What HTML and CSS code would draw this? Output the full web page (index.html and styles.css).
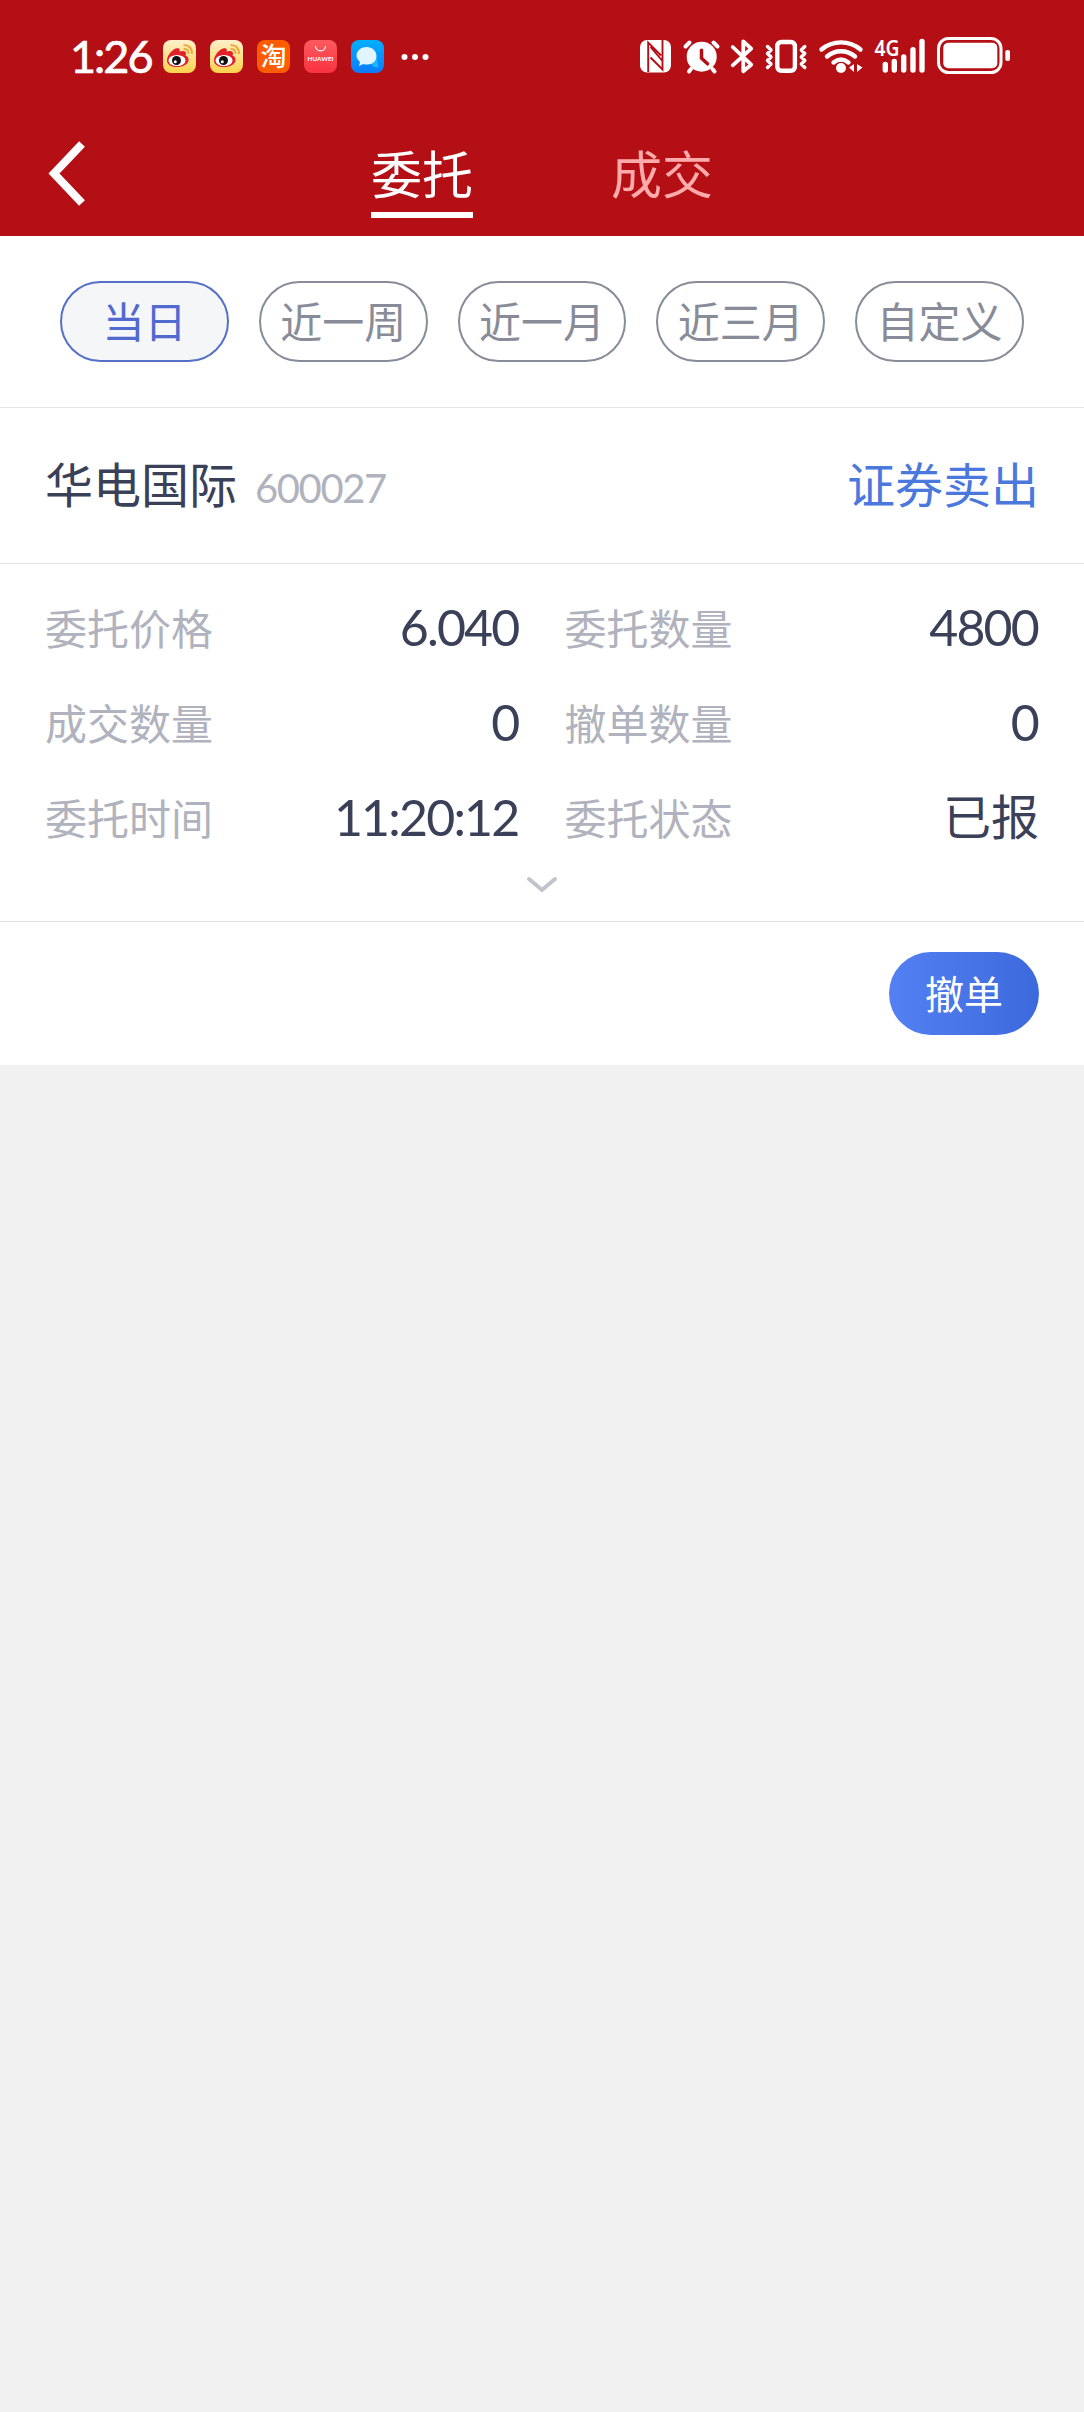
FILE: index.html
```html
<!DOCTYPE html>
<html lang="zh-CN">
<head>
<meta charset="utf-8">
<title>委托</title>
<link rel="stylesheet" href="styles.css">
</head>
<body>
<header class="top">
  <div class="status">
    <div class="status-left">
      <span class="time">1:26</span>
      <svg class="app" viewBox="0 0 33 33">
        <defs>
          <linearGradient id="wb" x2="0" y2="1"><stop stop-color="#fff0cb"/><stop offset="1" stop-color="#ffd24b"/></linearGradient>
          <g id="weibo">
            <rect width="33" height="33" rx="8" fill="url(#wb)"/>
            <path d="M4 20.500C4 14 12 6.500 16 8.500c1 1 1 2 .5 3 3-1 6.500-1 6.500 2 0 1-.3 1.500-.5 2C28 17.500 26.500 26 16 27 10 27.500 4 25.500 4 20.500z" fill="#e2202a"/>
            <ellipse cx="14" cy="20.500" rx="8.500" ry="5.500" fill="#fff"/>
            <circle cx="13.500" cy="20.500" r="4.500" fill="#111"/>
            <circle cx="12.300" cy="21.800" r="1.500" fill="#fff"/>
            <path d="M20.500 5q8.500 0 8.500 9M20.500 8.800q5 0 5 5" fill="none" stroke="#eda93a" stroke-width="2"/>
          </g>
        </defs>
        <use href="#weibo"/>
      </svg>
      <svg class="app" viewBox="0 0 33 33"><use href="#weibo"/></svg>
      <span class="app taobao">淘</span>
      <svg class="app" viewBox="0 0 33 33">
        <defs><linearGradient id="hw" x2="0" y2="1"><stop stop-color="#ff5a60"/><stop offset="1" stop-color="#f8323f"/></linearGradient></defs>
        <rect width="33" height="33" rx="8" fill="url(#hw)"/>
        <path d="M11.500 6c0 6.500 10 6.500 10 0" fill="none" stroke="#fff" stroke-width="1.200"/>
        <text class="brand" x="16.500" y="21" text-anchor="middle" textLength="26" lengthAdjust="spacingAndGlyphs">HUAWEI</text>
      </svg>
      <svg class="app" viewBox="0 0 33 33">
        <defs><linearGradient id="ms" x2="0" y2="1"><stop stop-color="#00b0ff"/><stop offset="1" stop-color="#0a7bff"/></linearGradient></defs>
        <rect width="33" height="33" rx="8" fill="url(#ms)"/>
        <path d="M21 21l5-3 1 6 .5 3.500-6-1z" fill="#16b8f8"/>
        <path d="M15.500 7c6 0 10 4 10 9s-4 8.500-9 8.500c-2 0-3 0-4-.5l-4.500 2 1-4C7 20 5.500 18 5.500 16c0-5 4-9 10-9z" fill="#e0f5ff"/>
      </svg>
      <svg class="more" viewBox="0 0 28 8" fill="#fff"><circle cx="3.500" cy="4" r="3"/><circle cx="14" cy="4" r="3"/><circle cx="24.500" cy="4" r="3"/></svg>
    </div>
    <svg class="status-right" viewBox="0 0 376 40" fill="none" stroke="#fff" stroke-linecap="round" stroke-linejoin="round">
      <rect x="0" y="4" width="31" height="32.500" rx="7" fill="#fff" stroke="none"/>
      <path d="M8.200 36V6.500L21 19.500M22.500 4v29.500L10.500 21.500M10.500 11L22.500 25" stroke="#b50f16" stroke-width="1.900" stroke-linecap="butt" stroke-linejoin="miter"/>
      <circle cx="61.700" cy="20.700" r="15" fill="#fff" stroke="none"/>
      <path d="M61.500 14.300v8l6 5.500" stroke="#b50f16" stroke-width="3.500"/>
      <path d="M45.500 10.500l4-4M73.500 6.500l4 4M51 33l-2 2.500M72.500 33l2 2.500" stroke-width="4"/>
      <path d="M92.700 11l18.500 17.700-7.900 6.600V5.300l7.900 7.400-18.500 16.600" stroke-width="3.800"/>
      <rect x="137.300" y="6" width="17.600" height="28.800" rx="4" stroke-width="4.400"/>
      <path d="M127.500 10.500l3.500 3.500-3.500 3.500 3.500 3.500-3.500 3.500 3.500 3.500-3.500 3.500M164.800 10.500l-3.500 3.500 3.500 3.500-3.500 3.500 3.500 3.500-3.500 3.500 3.500 3.500" stroke-width="3.400"/>
      <path d="M181.500 13.500c11-9.500 28-9.500 39 0M187 20.500c8-7 20-7 28 0M193.500 26.500c5-4 10-4 15 0" stroke-width="4.400"/>
      <circle cx="201" cy="32" r="5" fill="#fff" stroke="none"/>
      <path d="M214 28v8l-5-4.500zM217 28l5.500 3.500-5.500 4.500z" fill="#fff" stroke="none"/>
      <text class="net" x="234.500" y="19.500" textLength="25" lengthAdjust="spacingAndGlyphs">4G</text>
      <path d="M245.300 28.400v5.600M254.300 25.400v8.600M263.700 21v13M273 13.700v20.300M282 5.400v28.600" stroke-width="5.400"/>
      <rect x="298.500" y="2.500" width="62.500" height="34" rx="10" stroke-width="3"/>
      <rect x="303.300" y="6.700" width="54" height="25.600" rx="5" fill="#fff" stroke="none"/>
      <rect x="365.300" y="14" width="4.700" height="11" rx="2" fill="#fff" stroke="none"/>
    </svg>
  </div>
  <nav class="nav">
    <svg class="back" viewBox="0 0 40 64"><path d="M35 3L7 32.500 35 62" fill="none" stroke="#fff" stroke-width="8"/></svg>
    <div class="tabs"><span class="tab tab-on">委托</span><span class="tab">成交</span></div>
  </nav>
</header>

<div class="filters">
  <span class="chip chip-on">当日</span>
  <span class="chip">近一周</span>
  <span class="chip">近一月</span>
  <span class="chip">近三月</span>
  <span class="chip">自定义</span>
</div>

<section class="order">
  <div class="order-head">
    <span class="name">华电国际</span>
    <span class="code">600027</span>
    <span class="side">证券卖出</span>
  </div>
  <div class="order-body">
    <div class="fields">
      <div class="field"><span class="label">委托价格</span><span class="value">6.040</span></div>
      <div class="field"><span class="label">委托数量</span><span class="value">4800</span></div>
      <div class="field"><span class="label">成交数量</span><span class="value">0</span></div>
      <div class="field"><span class="label">撤单数量</span><span class="value">0</span></div>
      <div class="field"><span class="label">委托时间</span><span class="value">11:20:12</span></div>
      <div class="field"><span class="label">委托状态</span><span class="value value-cn">已报</span></div>
    </div>
    <svg class="expand" viewBox="0 0 32 18"><path d="M3 3l13 11L29 3" fill="none" stroke="#c3c4cb" stroke-width="4" stroke-linecap="round"/></svg>
  </div>
  <div class="order-foot"><button class="cancel">撤单</button></div>
</section>
</body>
</html>
```
FILE: styles.css
```css
* { box-sizing: border-box; }
body {
  margin: 0;
  min-height: 2412px;
  background: #f1f1f1;
  color: #3a4058;
  font-family: Lato, "Noto Sans CJK SC", sans-serif;
}
svg { display: block; flex: none; overflow: visible; }

/* header */
.top { height: 236px; background: #b50f16; color: #fff; }
.status {
  display: flex;
  justify-content: space-between;
  height: 112px;
  padding: 36px 68px 0 70px;
}
.status-left { display: flex; align-items: center; gap: 14px; height: 41px; }
.time {
  width: 79px;
  font-size: 45px;
  line-height: 41px;
  letter-spacing: -2px;
  white-space: nowrap;
  -webkit-text-stroke: .7px #fff;
}
.app { width: 33px; height: 33px; }
.taobao {
  border-radius: 8px;
  background: linear-gradient(100deg, #ff5a00, #ff5f00);
  font-size: 26px;
  font-weight: 500;
  line-height: 32px;
  text-align: center;
}
.brand { font: 700 5.5px Lato, sans-serif; fill: #fff; stroke: none; }
.more { width: 28px; height: 8px; margin-left: 3px; }
.status-right { width: 376px; height: 40px; }
.net { font: 600 22px "Noto Sans", sans-serif; fill: #fff; stroke: none; }

.nav { display: flex; height: 124px; padding-left: 47px; }
.back { width: 40px; height: 64px; margin-top: 29px; }
.tabs { display: flex; gap: 138px; margin: 30px 0 0 284px; height: 76px; }
.tab { font-size: 51px; line-height: 65px; color: #ffabab; }
.tab-on { color: #fff; border-bottom: 6px solid #fff; }

/* date range */
.filters {
  display: flex;
  gap: 30px;
  height: 172px;
  padding: 45px 60px 0;
  background: #fff;
  border-bottom: 1px solid #e4e4e6;
}
.chip {
  flex: 1;
  height: 81px;
  border: 2px solid #888c98;
  border-radius: 41px;
  color: #888c98;
  font-size: 42px;
  line-height: 78px;
  text-align: center;
}
.chip-on { border-color: #5470c8; background: #f5f6f8; color: #506ad0; }

/* order card */
.order { background: #fff; }
.order-head {
  display: flex;
  align-items: baseline;
  height: 156px;
  padding: 41px 45px 0 45px;
  border-bottom: 1px solid #e4e4e6;
  font-size: 48px;
  line-height: 72px;
}
.code { margin-left: 18px; color: #b0b3bd; font-size: 40px; letter-spacing: -1.4px; }
.side { margin-left: auto; color: #4b78dc; }
.order-body { height: 358px; padding: 17px 45px 0; border-bottom: 1px solid #e4e4e6; }
.fields { display: grid; grid-template-columns: 1fr 1fr; column-gap: 45px; }
.field { display: flex; justify-content: space-between; height: 95px; line-height: 97px; }
.label { color: #b0b3bd; font-size: 42px; }
.value { font-size: 50px; letter-spacing: -1.8px; margin-right: 1px; line-height: 92px; }
.value-cn { font-size: 48px; letter-spacing: 0; margin-right: 0; }
.expand { width: 32px; height: 18px; margin: 10px auto 0; }
.order-foot { display: flex; justify-content: flex-end; height: 143px; padding: 30px 45px 0; }
.cancel {
  width: 150px;
  height: 83px;
  padding: 0 0 3px;
  border: 0;
  border-radius: 42px;
  background: linear-gradient(90deg, #5381f4, #3c69dc);
  color: #fff;
  font: 39px/80px "Noto Sans CJK SC", sans-serif;
}
```
